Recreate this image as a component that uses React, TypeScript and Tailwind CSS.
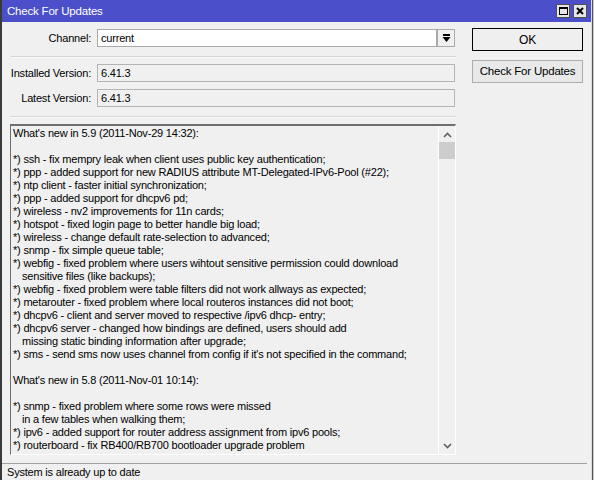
import React from "react";

type Line = { text: string; indent?: boolean };

const changelog: Line[] = [
  { text: "What's new in 5.9 (2011-Nov-29 14:32):" },
  { text: "" },
  { text: "*) ssh - fix mempry leak when client uses public key authentication;" },
  { text: "*) ppp - added support for new RADIUS attribute MT-Delegated-IPv6-Pool (#22);" },
  { text: "*) ntp client - faster initial synchronization;" },
  { text: "*) ppp - added support for dhcpv6 pd;" },
  { text: "*) wireless - nv2 improvements for 11n cards;" },
  { text: "*) hotspot - fixed login page to better handle big load;" },
  { text: "*) wireless - change default rate-selection to advanced;" },
  { text: "*) snmp - fix simple queue table;" },
  { text: "*) webfig - fixed problem where users wihtout sensitive permission could download" },
  { text: "sensitive files (like backups);", indent: true },
  { text: "*) webfig - fixed problem were table filters did not work allways as expected;" },
  { text: "*) metarouter - fixed problem where local routeros instances did not boot;" },
  { text: "*) dhcpv6 - client and server moved to respective /ipv6 dhcp- entry;" },
  { text: "*) dhcpv6 server - changed how bindings are defined, users should add" },
  { text: "missing static binding information after upgrade;", indent: true },
  { text: "*) sms - send sms now uses channel from config if it's not specified in the command;" },
  { text: "" },
  { text: "What's new in 5.8 (2011-Nov-01 10:14):" },
  { text: "" },
  { text: "*) snmp - fixed problem where some rows were missed" },
  { text: "in a few tables when walking them;", indent: true },
  { text: "*) ipv6 - added support for router address assignment from ipv6 pools;" },
  { text: "*) routerboard - fix RB400/RB700 bootloader upgrade problem" },
];

function FieldRow({
  label,
  children,
}: {
  label: string;
  children: React.ReactNode;
}) {
  return (
    <div className="flex items-center h-[18px]">
      <div className="w-[81px] text-right pr-[0px]">{label}</div>
      <div className="ml-[6px] flex flex-1">{children}</div>
    </div>
  );
}

function Separator() {
  return <div className="ml-[1px] h-[2px] border-t border-[#d5d5d5] bg-[#fbfbfb]" />;
}

function DropdownIcon() {
  return (
    <svg width="9" height="9" viewBox="0 0 9 9">
      <rect x="1" y="0" width="7" height="2" fill="#000" />
      <path d="M0.5 3 H8.5 L4.5 8 Z" fill="#000" />
    </svg>
  );
}

function Chevron({ up }: { up?: boolean }) {
  return (
    <svg width="9" height="6" viewBox="0 0 9 6">
      <path
        d={up ? "M1 5 L4.5 1.5 L8 5" : "M1 1 L4.5 4.5 L8 1"}
        stroke="#606060"
        strokeWidth="1.6"
        fill="none"
      />
    </svg>
  );
}

export default function App() {
  return (
    <div className="w-[594px] h-[480px] overflow-hidden flex bg-[#f0f0f0] text-[11px] tracking-[-0.2px] text-black font-['Liberation_Sans',Arial,sans-serif]">
      {/* edge of the window behind */}
      <div className="w-[2px] h-full bg-[#3a3a3a]" />

      <div className="w-[589px] h-full flex flex-col">
        {/* title bar */}
        <div className="h-[22px] bg-[#4b4fc9] flex items-center pl-[5px] pr-[4px]">
          <span className="text-white text-[11.5px] flex-1 pt-[1px]">Check For Updates</span>
          <div className="flex gap-[3px] mt-[-1px]">
            <div className="w-[14px] h-[14px] bg-[#e6e6e6] border border-[#505050] flex items-center justify-center">
              <div className="w-[9px] h-[8px] border border-black border-t-2" />
            </div>
            <div className="w-[14px] h-[14px] bg-[#e6e6e6] border border-[#505050] flex items-center justify-center">
              <svg width="8" height="8" viewBox="0 0 8 8">
                <path d="M1 1 L7 7 M7 1 L1 7" stroke="#000" strokeWidth="2" />
              </svg>
            </div>
          </div>
        </div>

        <div className="flex flex-1 min-h-0">
          {/* form + changelog */}
          <div className="w-[454px] pl-[8px] pt-[7px] flex flex-col">
            <FieldRow label="Channel:">
              <div className="w-[340px] h-[18px] bg-white border border-[#a9a9a9] pl-[3px] leading-[16px]">
                current
              </div>
              <div className="w-[18px] h-[18px] border border-[#a9a9a9] bg-[#f0f0f0] flex items-center justify-center">
                <DropdownIcon />
              </div>
            </FieldRow>

            <div className="mt-[9px]">
              <Separator />
            </div>

            <div className="mt-[6px] flex flex-col gap-[7px]">
              <FieldRow label="Installed Version:">
                <div className="w-[358px] h-[18px] border border-[#b4b4b4] pl-[3px] leading-[16px]">6.41.3</div>
              </FieldRow>
              <FieldRow label="Latest Version:">
                <div className="w-[358px] h-[18px] border border-[#b4b4b4] pl-[3px] leading-[16px]">6.41.3</div>
              </FieldRow>
            </div>

            <div className="mt-[9px]">
              <Separator />
            </div>

            {/* changelog box */}
            <div className="mt-[6px] w-[446px] h-[331px] flex border-t-2 border-l border-[#6e6e6e] border-r border-b border-r-white border-b-white">
              <div className="flex-1 pl-[2px] pt-[1px] overflow-hidden">
                {changelog.map((line, i) => (
                  <div
                    key={i}
                    className={`h-[13px] leading-[13px] whitespace-nowrap ${line.indent ? "pl-[9px]" : ""}`}
                  >
                    {line.text}
                  </div>
                ))}
              </div>
              <div className="w-[17px] border-l border-white flex flex-col items-stretch">
                <div className="h-[16px] flex items-center justify-center pt-[1px]">
                  <Chevron up />
                </div>
                <div className="h-[17px] bg-[#cdcdcd]" />
                <div className="flex-1" />
                <div className="h-[16px] flex items-center justify-center">
                  <Chevron />
                </div>
              </div>
            </div>
          </div>

          {/* buttons */}
          <div className="pl-[16px] pt-[6px] flex flex-col gap-[9px]">
            <div className="w-[111px] h-[23px] border border-black bg-[#efefef] flex items-center justify-center text-[12px]">
              OK
            </div>
            <div className="w-[111px] h-[23px] border border-[#adadad] bg-[#e9e9e9] flex items-center justify-center text-[11.5px]">
              Check For Updates
            </div>
          </div>
        </div>

        {/* status bar */}
        <div className="mt-[8px] h-[17px] w-[585px] border-t border-[#a0a0a0] pl-[5px] leading-[16px]">
          System is already up to date
        </div>
      </div>

      {/* right edge */}
      <div className="w-[1px] h-full bg-[#dcdcdc]" />
      <div className="w-[1px] h-full bg-[#555555]" />
      <div className="w-[1px] h-full bg-[#c8c8c8]" />
    </div>
  );
}
